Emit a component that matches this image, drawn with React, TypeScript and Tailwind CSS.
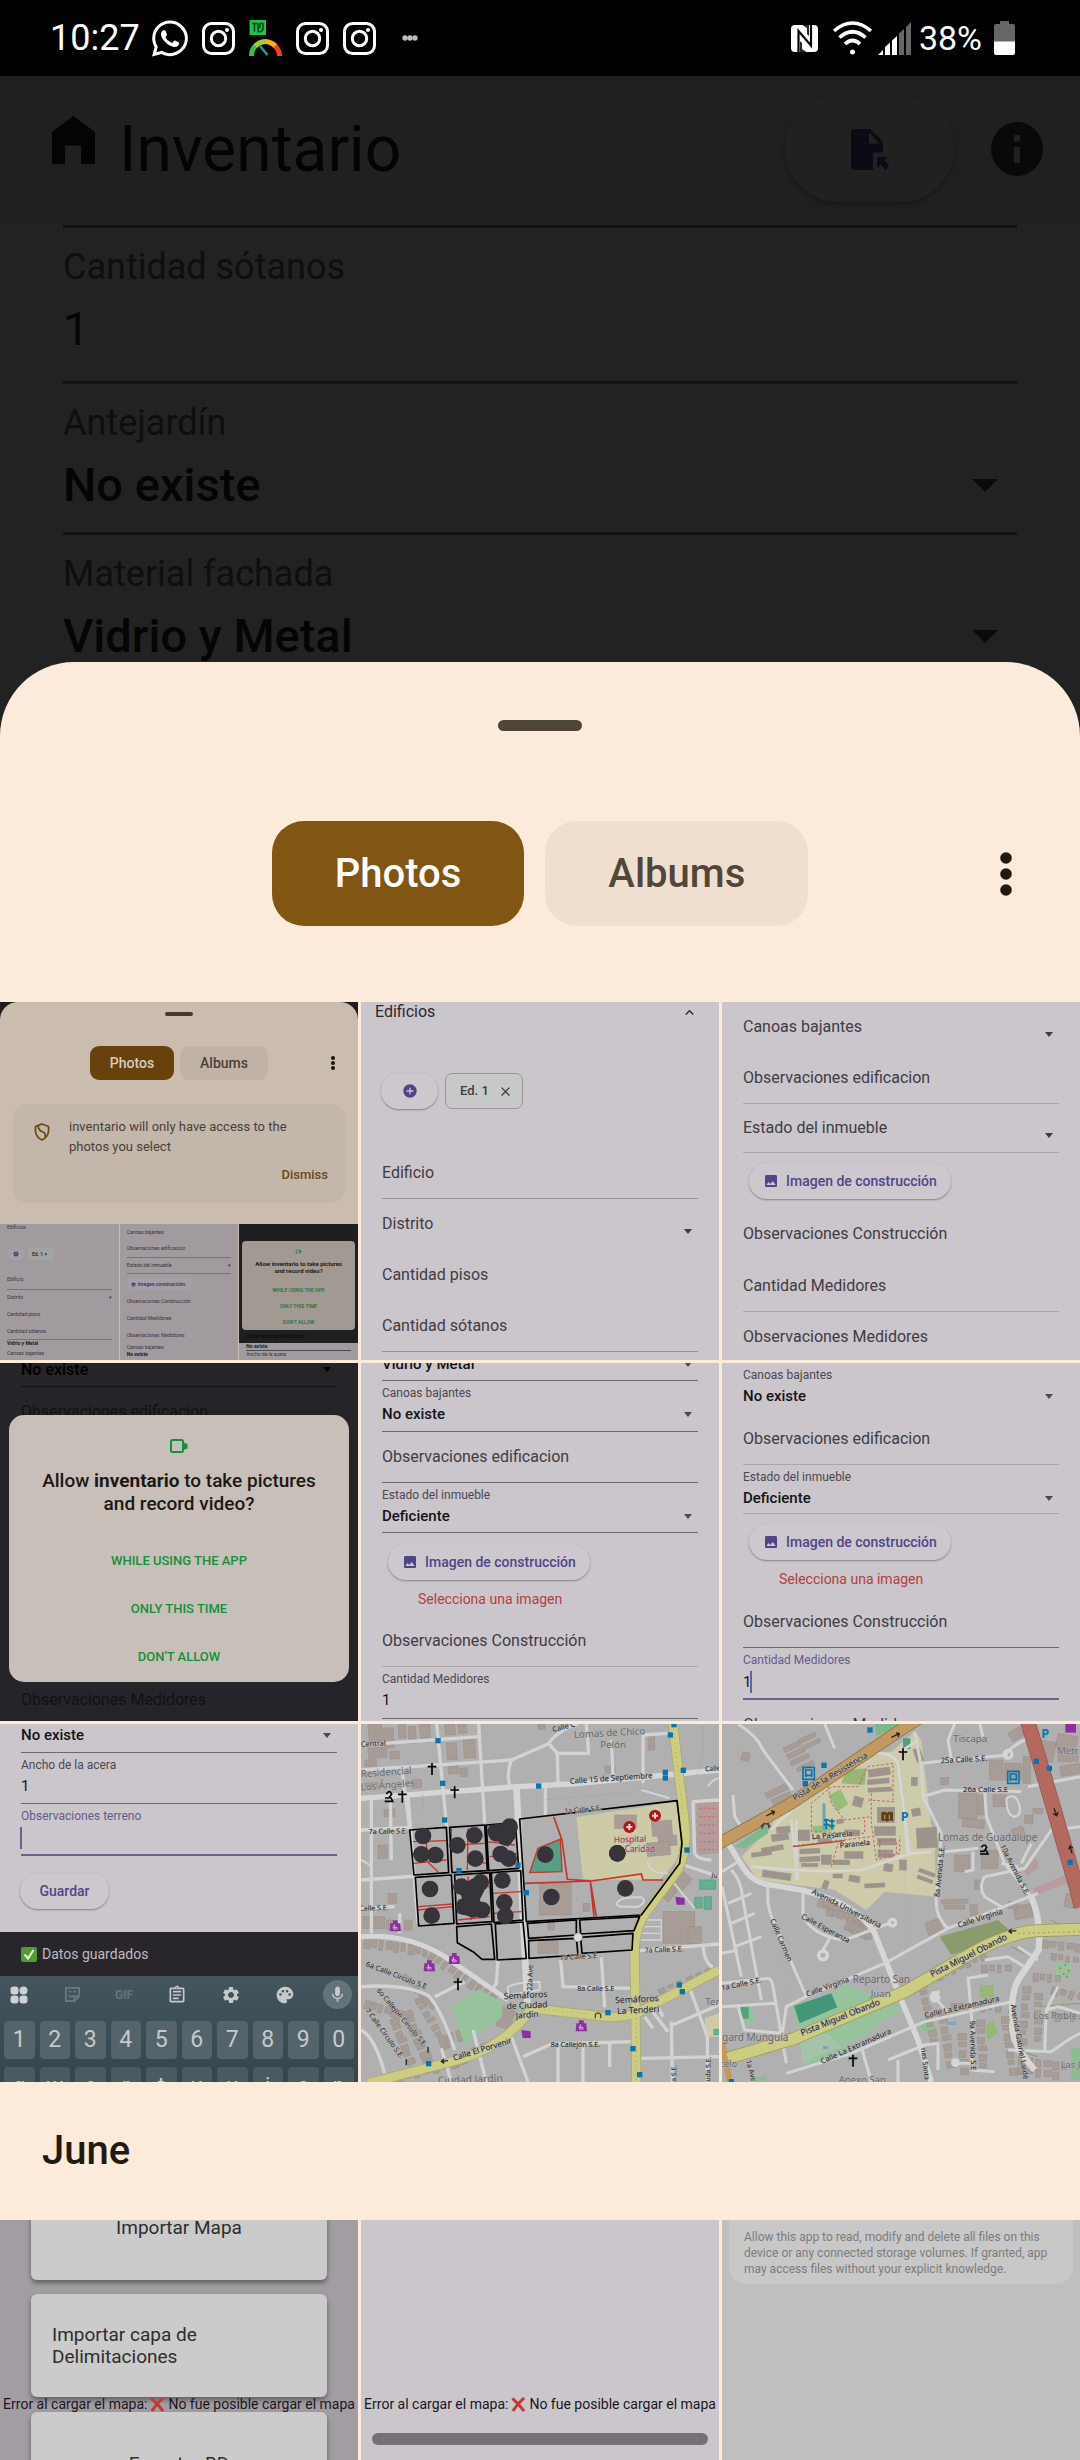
import React from "react";
import clsx from "clsx";
import { FaWhatsapp } from "react-icons/fa";
import {
  MdImage,
  MdMic,
  MdOutlineAssignment,
  MdOutlineVideocam,
  MdPalette,
  MdSettings,
  MdAddCircle,
  MdClose,
  MdKeyboardArrowUp,
} from "react-icons/md";

/* ---------- Status bar ---------- */

function InstagramIcon() {
  return (
    <svg viewBox="0 0 33 33" className="size-[33px]" fill="none" stroke="#fff" strokeWidth="3">
      <rect x="1.5" y="1.5" width="30" height="30" rx="8" />
      <circle cx="16.5" cy="16.5" r="7.2" />
      <circle cx="25" cy="8" r="2" fill="#fff" stroke="none" />
    </svg>
  );
}

function SpeedIcon() {
  return (
    <svg viewBox="0 0 33 36" className="h-[36px] w-[33px]" fill="none">
      <rect x="0.5" y="0" width="16.5" height="15" fill="#1fc24a" />
      <path d="M3 3.5h6M5.500 3.500v8M9 3.500v8h3.500l1.500-2v-6h-3v5" stroke="#0b3d18" strokeWidth="1.500" />
      <path d="M2.500 36A14 14 0 0 1 8 24.500" stroke="#3cc04c" strokeWidth="5" />
      <path d="M6.500 26A14 14 0 0 1 17 21.500" stroke="#a3cf2c" strokeWidth="5" />
      <path d="M16 21.500A14 14 0 0 1 27 27" stroke="#fbb40c" strokeWidth="5" />
      <path d="M26 26A14 14 0 0 1 30.500 36" stroke="#f4431c" strokeWidth="5" />
      <path d="M11 26l7.500 9" stroke="#3c8f92" strokeWidth="2.500" />
    </svg>
  );
}

function NfcIcon() {
  return (
    <svg viewBox="0 0 27 27" className="size-[27px]">
      <rect width="27" height="27" rx="4" fill="#fff" />
      <path d="M7.500 27V6L20 20.500V0" stroke="#000" strokeWidth="2.200" fill="none" />
      <path d="M6.500 3L18 14V8L11 0" stroke="#000" strokeWidth="0" fill="none" />
      <path d="M11 18V24L15.500 27H9V16zM16 9V3L11.500 0H18V11z" fill="#000" fillOpacity="0.85" />
    </svg>
  );
}

function WifiIcon() {
  return (
    <svg viewBox="0 0 39 34" className="h-[34px] w-[39px]" fill="none" stroke="#fff" strokeWidth="3.600" strokeLinecap="butt">
      <path d="M1 10Q19.500 -6 38 10" />
      <path d="M6.500 16.500Q19.500 5 32.500 16.500" />
      <path d="M12 23Q19.500 16 27 23" />
      <circle cx="19.500" cy="31" r="2.500" fill="#fff" stroke="none" />
    </svg>
  );
}

function SignalIcon() {
  return (
    <svg viewBox="0 0 33 33" className="size-[33px]">
      <path d="M0 33l5-5v5zM7 33v-8l5-4.500V33zM14 33V18.500l5-4.500v19z" fill="#fff" />
      <path d="M21 33V11.500l5-4.500v26zM28 33V5l5-5v33z" fill="#666" />
    </svg>
  );
}

function StatusBar() {
  return (
    <div className="flex h-[76px] shrink-0 items-center justify-between bg-black pr-[65px] pl-[50px] text-[36px] leading-none text-white">
      <div className="flex items-center gap-[14px]">
        <span className="-mr-[2px]">10:27</span>
        <FaWhatsapp className="h-[41px] w-[36px]" />
        <InstagramIcon />
        <SpeedIcon />
        <InstagramIcon />
        <InstagramIcon />
        <svg viewBox="0 0 16 6" className="ml-[12px] h-[6px] w-[16px]" fill="#bbb">
          <circle cx="3" cy="3" r="2.700" />
          <circle cx="8" cy="3" r="2.700" />
          <circle cx="13" cy="3" r="2.700" />
        </svg>
      </div>
      <div className="flex items-center">
        <NfcIcon />
        <span className="w-[15px]" />
        <WifiIcon />
        <span className="w-[6px]" />
        <SignalIcon />
        <span className="ml-[8px] text-[34px]">38%</span>
        <svg viewBox="0 0 21 34" className="ml-[12px] h-[34px] w-[21px]">
          <path d="M6 0h9v3h4q2 0 2 2v16H0V5q0-2 2-2h4z" fill="#666" />
          <path d="M0 20.500h21V32q0 2-2 2H2q-2 0-2-2z" fill="#fff" />
        </svg>
      </div>
    </div>
  );
}

/* ---------- Dimmed form behind the sheet ---------- */

function AppHeader() {
  return (
    <header className="flex h-[146px] shrink-0 items-center bg-[#202023] pr-[37px] pl-[52px] text-black">
      <svg viewBox="0 0 43 48" className="mb-[18px] h-[48px] w-[43px]" fill="#040404">
        <path d="M21.300 0L43 16V48H29V29.500H13V48H0V16z" />
      </svg>
      <h1 className="mt-[2px] ml-[24px] text-[64px] leading-none text-[#040404]">Inventario</h1>
      <button
        type="button"
        aria-label="Exportar"
        className="ml-auto flex h-[106px] w-[169px] items-center justify-center rounded-full bg-[#212121] shadow-[0_3px_5px_rgba(0,0,0,0.25)]"
      >
        <svg viewBox="0 0 38 41" className="h-[41px] w-[38px]" fill="#0d0a16" fillRule="evenodd">
          <path d="M4 0H19.500L32 12.500V23.500H22V41H4Q0 41 0 37V4Q0 0 4 0zM18 3.500V14.500H28.500z" />
          <path d="M26 28H36.500L33.500 31L38 36.500L34.500 41L29.500 35.500L26 39z" />
        </svg>
      </button>
      <button type="button" aria-label="Información" className="ml-[37px]">
        <svg viewBox="0 0 52 54" className="h-[54px] w-[52px]">
          <ellipse cx="26" cy="27" rx="26" ry="27" fill="#090909" />
          <path d="M23 13h6v6.500h-6zM23 25h6v16h-6z" fill="#202023" />
        </svg>
      </button>
    </header>
  );
}

const fieldText = "h-[56px] w-full bg-transparent text-[47px] leading-[56px] text-[#050505] outline-none";

function SelectField({ id, label, value }: { id: string; label: string; value: string }) {
  return (
    <div className="flex h-[151px] flex-col border-b-[3px] border-[#121212] pt-[17px]">
      <label htmlFor={id} className="text-[36px] leading-[44px] text-[#0e0e0e]">
        {label}
      </label>
      <div className="mt-[12px] flex items-center pr-[19px]">
        <select id={id} className={clsx(fieldText, "appearance-none font-medium")} defaultValue={value}>
          <option>{value}</option>
        </select>
        <svg viewBox="0 0 26 13" className="h-[13px] w-[26px] shrink-0" fill="#0a0a0a">
          <path d="M0 0h26L13 13z" />
        </svg>
      </div>
    </div>
  );
}

function FormBehind() {
  return (
    <form className="mx-[63px] mt-[3px] flex flex-col border-t-[3px] border-[#111]">
      <div className="flex h-[156px] flex-col border-b-[3px] border-[#121212] pt-[17px]">
        <label htmlFor="sotanos" className="text-[36px] leading-[44px] text-[#0e0e0e]">
          Cantidad sótanos
        </label>
        <input id="sotanos" defaultValue="1" className={clsx(fieldText, "mt-[12px]")} />
      </div>
      <SelectField id="antejardin" label="Antejardín" value="No existe" />
      <SelectField id="fachada" label="Material fachada" value="Vidrio y Metal" />
    </form>
  );
}

/* ---------- Pieces shared by the form thumbnails ---------- */

function Caret({ className }: { className?: string }) {
  return (
    <svg viewBox="0 0 8 5" className={clsx("h-[5px] w-[8px] shrink-0", className)} fill="currentColor">
      <path d="M0 0h8L4 5z" />
    </svg>
  );
}

const H = {
  49: "h-[49px]",
  50: "h-[50px]",
  51: "h-[51px]",
  52: "h-[52px]",
};

const LINES = {
  none: "border-transparent",
  light: "border-[#aaa6ab]",
  mid: "border-[#949095]",
  dark: "border-[#6c696e]",
  purple: "border-[#6b6190]",
  black: "border-[#121214]",
};

type RowProps = { label: string; h?: keyof typeof H; line?: keyof typeof LINES; caret?: boolean };

function EmptyRow({ label, h = 51, line = "none", caret }: RowProps) {
  return (
    <div className={clsx("mx-[21px] flex shrink-0 items-center justify-between border-b text-[16px] leading-[20px]", H[h], LINES[line])}>
      <span className="whitespace-nowrap">{label}</span>
      {caret && <Caret className="mt-[15px] mr-[6px]" />}
    </div>
  );
}

function FilledRow({
  label,
  value,
  h = 51,
  line = "dark",
  caret,
  focused,
}: RowProps & { value: string; focused?: boolean }) {
  return (
    <div
      className={clsx(
        "mx-[21px] flex shrink-0 flex-col pt-[4px]",
        focused ? "border-b-2" : "border-b",
        H[h],
        LINES[line],
      )}
    >
      <span className={clsx("text-[12px] leading-[16px]", focused ? "text-[#645a8c]" : "text-[#4b484e]")}>{label}</span>
      <span className="mt-[3px] flex items-center justify-between text-[15px] leading-[20px] text-[#141316]">
        <span className={clsx("flex items-center", caret && "font-medium")}>
          {value}
          {focused && <span className="-ml-px h-[22px] w-[2px] bg-[#6b6190]" />}
        </span>
        {caret && <Caret className="mr-[6px] text-[#4b484e]" />}
      </span>
    </div>
  );
}

function ImageButton() {
  return (
    <span className="ml-[27px] flex h-[36px] w-[202px] shrink-0 items-center rounded-full bg-[#cdc8ce] pl-[14px] text-[14px] font-medium text-[#51458a] shadow-[0_1px_2px_rgba(0,0,0,0.35)]">
      <MdImage className="mr-[7px] size-[16px]" />
      Imagen de construcción
    </span>
  );
}

const lilac = "flex h-full w-full flex-col overflow-hidden bg-[#cbc6cc] text-left text-[#3f3c42]";

/* ---------- Thumbnails ---------- */

function MiniLine({ children, strong }: { children: React.ReactNode; strong?: boolean }) {
  return <span className={clsx("block whitespace-nowrap", strong && "font-bold text-[#1d1b1f]")}>{children}</span>;
}

const tiny = "flex h-full min-w-0 flex-col overflow-hidden bg-[#a19a9f] px-[7px] text-[5px] leading-[7px] text-[#38353a]";

function PickerThumb() {
  return (
    <div className="h-full w-full overflow-hidden bg-[#1d1c1e] text-left">
      <div className="flex h-full flex-col rounded-t-[18px] bg-[#cabcaf]">
        <div className="mx-auto mt-[10px] h-[4px] w-[28px] shrink-0 rounded-full bg-[#46382f]" />
        <div className="mt-[30px] flex h-[34px] shrink-0 items-center pl-[90px] text-[14px] font-medium">
          <span className="flex h-full w-[84px] items-center justify-center rounded-[9px] bg-[#67420d] text-[#d5ccc3]">Photos</span>
          <span className="ml-[6px] flex h-full w-[88px] items-center justify-center rounded-[9px] bg-[#c0b2a6] text-[#4c4137]">
            Albums
          </span>
          <svg viewBox="0 0 4 16" className="mr-[23px] ml-auto h-[16px] w-[4px]" fill="#17120c">
            <circle cx="2" cy="3" r="2" />
            <circle cx="2" cy="8" r="2" />
            <circle cx="2" cy="13" r="2" />
          </svg>
        </div>
        <div className="mx-[13px] mt-[24px] flex h-[99px] shrink-0 rounded-[14px] bg-[#c3b6ab] text-[13px] leading-[20px] text-[#4a4037]">
          <svg viewBox="0 0 16 18" className="mt-[19px] ml-[21px] h-[18px] w-[16px] shrink-0" fill="none" stroke="#6b4812" strokeWidth="1.700">
            <path d="M8 1L14.500 3.500V8.500Q14 14 8 17Q2 14 1.500 8.500V3.500z" />
            <path d="M4 3Q5 8 9 9Q12 10 11 14" />
          </svg>
          <span className="mt-[13px] ml-[19px] flex flex-1 flex-col">
            <span className="whitespace-nowrap">inventario will only have access to the</span>
            <span>photos you select</span>
            <span className="mt-[8px] mr-[17px] self-end font-medium text-[#6b4812]">Dismiss</span>
          </span>
        </div>
        <div className="mt-[21px] grid min-h-0 flex-1 grid-cols-3 gap-px">
          <div className={tiny}>
            <MiniLine>Edificios</MiniLine>
            <div className="mt-[17px] flex h-[12px] shrink-0 gap-[3px]">
              <span className="flex w-[18px] items-center justify-center rounded-full bg-[#a59fa6] text-[#453a78]">
                <MdAddCircle className="size-[6px]" />
              </span>
              <span className="w-[26px] rounded-[2px] bg-[#a0a5a1] pl-[4px] font-bold leading-[12px]">Ed. 1 ×</span>
            </div>
            <div className="mt-[16px] h-[14px] shrink-0 border-b border-[#77737a]">Edificio</div>
            <div className="mt-[4px] flex h-[17px] shrink-0 justify-between">
              Distrito
              <span>▾</span>
            </div>
            <div className="h-[17px] shrink-0">Cantidad pisos</div>
            <div className="h-[12px] shrink-0 border-b border-[#77737a]">Cantidad sótanos</div>
            <MiniLine strong>Vidrio y Metal</MiniLine>
            <div className="mt-[3px]">Canoas bajantes</div>
          </div>
          <div className={tiny}>
            <div className="mt-[5px] h-[16px] shrink-0">Canoas bajantes</div>
            <div className="h-[13px] shrink-0 border-b border-[#77737a]">Observaciones edificacion</div>
            <div className="mt-[4px] flex h-[12px] shrink-0 justify-between border-b border-[#77737a]">
              Estado del inmueble
              <span>▾</span>
            </div>
            <span className="mt-[4px] flex h-[12px] w-[66px] shrink-0 items-center rounded-full bg-[#a59fa6] pl-[4px] font-bold text-[#453a78]">
              <MdImage className="mr-[2px] size-[5px]" />
              Imagen construcción
            </span>
            <div className="mt-[8px] h-[17px] shrink-0">Observaciones Construcción</div>
            <div className="h-[17px] shrink-0">Cantidad Medidores</div>
            <div className="h-[12px] shrink-0">Observaciones Medidores</div>
            <MiniLine>Canoas bajantes</MiniLine>
            <MiniLine strong>No existe</MiniLine>
          </div>
          <div className="flex min-w-0 flex-col overflow-hidden bg-[#1f1e20] text-[5px] leading-[7px]">
            <div className="mx-[3px] mt-[17px] flex h-[89px] shrink-0 flex-col items-center rounded-[4px] bg-[#a29992] text-[#16733a]">
              <MdOutlineVideocam className="mt-[7px] size-[7px]" />
              <span className="mt-[5px] text-center text-[6px] font-bold text-[#1d1a17]">
                Allow inventario to take pictures
                <br />
                and record video?
              </span>
              <span className="mt-[13px] font-medium">WHILE USING THE APP</span>
              <span className="mt-[9px] font-medium">ONLY THIS TIME</span>
              <span className="mt-[9px] font-medium">DON'T ALLOW</span>
            </div>
            <div className="px-[7px] leading-[13px] text-[#060606]">Observaciones Medidores</div>
            <div className="flex-1 bg-[#a19a9f] px-[7px] text-[#38353a]">
              <MiniLine strong>No existe</MiniLine>
              <div className="border-t border-[#4b484e]">Ancho de la acera</div>
            </div>
          </div>
        </div>
      </div>
    </div>
  );
}

function BuildingsThumb() {
  return (
    <div className={lilac}>
      <div className="flex h-[20px] shrink-0 items-center justify-between pr-[21px] pl-[14px] text-[16px] leading-[20px] text-[#2b292d]">
        Edificios
        <MdKeyboardArrowUp className="size-[17px]" />
      </div>
      <div className="mt-[51px] flex h-[36px] shrink-0 gap-[7px] pl-[20px]">
        <span className="flex w-[57px] items-center justify-center rounded-full bg-[#cdc8ce] text-[#51458a] shadow-[0_1px_2px_rgba(0,0,0,0.35)]">
          <MdAddCircle className="size-[16px]" />
        </span>
        <span className="flex w-[78px] items-center rounded-[7px] border border-[#99969a] bg-[#c6c9c7] pl-[14px] text-[13px] font-medium">
          Ed. 1
          <MdClose className="ml-[9px] size-[15px]" />
        </span>
      </div>
      <div className="mt-[39px] flex flex-col">
        <EmptyRow label="Edificio" line="mid" />
        <EmptyRow label="Distrito" caret />
        <EmptyRow label="Cantidad pisos" />
        <EmptyRow label="Cantidad sótanos" line="mid" />
      </div>
    </div>
  );
}

function GuttersThumb() {
  return (
    <div className={lilac}>
      <EmptyRow label="Canoas bajantes" caret />
      <EmptyRow label="Observaciones edificacion" line="light" />
      <EmptyRow label="Estado del inmueble" h={49} line="light" caret />
      <div className="mt-[10px] mb-[10px]">
        <ImageButton />
      </div>
      <EmptyRow label="Observaciones Construcción" />
      <EmptyRow label="Cantidad Medidores" line="light" h={52} />
      <EmptyRow label="Observaciones Medidores" />
    </div>
  );
}

function PermissionThumb() {
  return (
    <div className="relative h-full w-full overflow-hidden bg-[#252428] text-left text-[16px] leading-[20px] text-[#121113]">
      <div className="flex h-full flex-col justify-between">
        <div>
          <div className="mx-[21px] -mt-[3px] flex h-[27px] items-start justify-between border-b border-[#121214]">
            <span className="font-medium text-black">No existe</span>
            <Caret className="mt-[7px] mr-[6px] text-black" />
          </div>
          <div className="mt-[15px] pl-[21px]">Observaciones edificacion</div>
        </div>
        <div className="mb-[11px] pl-[21px]">Observaciones Medidores</div>
      </div>
      <div className="absolute inset-x-[9px] top-[52px] flex h-[267px] flex-col items-center rounded-[15px] bg-[#c8bfb9] text-[13px] font-medium text-[#14903c]">
        <svg viewBox="0 0 18 14" className="mt-[24px] h-[14px] w-[18px]" fill="none" stroke="currentColor" strokeWidth="2">
          <rect x="1" y="1" width="12" height="12" rx="1.500" />
          <path d="M13.500 3.500L17.500 5V9.500L13.500 11z" fill="currentColor" stroke="none" />
        </svg>
        <p className="mt-[16px] text-center text-[19px] leading-[23px] text-[#1c1815]">
          Allow <b>inventario</b> to take pictures
          <br />
          and record video?
        </p>
        <span className="mt-[36px]">WHILE USING THE APP</span>
        <span className="mt-[28px]">ONLY THIS TIME</span>
        <span className="mt-[28px]">DON'T ALLOW</span>
      </div>
    </div>
  );
}

function SelectImageNote() {
  return <span className="mt-[9px] ml-[57px] text-[14px] leading-[20px] text-[#b3403c]">Selecciona una imagen</span>;
}

function MissingImageThumb() {
  return (
    <div className={lilac}>
      <div className="-mt-[32px] flex flex-col">
        <FilledRow label="Material fachada" value="Vidrio y Metal" h={50} caret />
        <FilledRow label="Canoas bajantes" value="No existe" caret />
        <EmptyRow label="Observaciones edificacion" line="dark" />
        <FilledRow label="Estado del inmueble" value="Deficiente" h={50} caret />
      </div>
      <div className="mt-[11px]">
        <ImageButton />
      </div>
      <SelectImageNote />
      <div className="mt-[6px] flex flex-col">
        <EmptyRow label="Observaciones Construcción" h={52} line="light" />
        <FilledRow label="Cantidad Medidores" value="1" h={52} />
      </div>
    </div>
  );
}

function MetersThumb() {
  return (
    <div className={lilac}>
      <FilledRow label="Canoas bajantes" value="No existe" h={50} line="none" caret />
      <EmptyRow label="Observaciones edificacion" h={52} line="light" />
      <FilledRow label="Estado del inmueble" value="Deficiente" h={49} line="light" caret />
      <div className="mt-[10px]">
        <ImageButton />
      </div>
      <SelectImageNote />
      <div className="mt-[7px] flex flex-col">
        <EmptyRow label="Observaciones Construcción" h={52} line="dark" />
        <FilledRow label="Cantidad Medidores" value="1" h={52} line="purple" focused />
        <EmptyRow label="Observaciones Medidores" />
      </div>
    </div>
  );
}

function CheckEmoji() {
  return (
    <svg viewBox="0 0 16 15" className="h-[15px] w-[16px]">
      <rect width="16" height="15" rx="2" fill="#4f9c35" />
      <path d="M3.500 7.500L7 11.500L12.500 3" fill="none" stroke="#e4ecdf" strokeWidth="2.200" />
    </svg>
  );
}

function CrossEmoji() {
  return (
    <svg viewBox="0 0 16 16" className="mx-[3px] inline-block size-[15px] align-[-3px]" stroke="#c23b33" strokeWidth="3.200">
      <path d="M1.500 1.500Q8 7 14 15M14 1Q7 7 2 15" fill="none" />
    </svg>
  );
}

const DIGITS = ["1", "2", "3", "4", "5", "6", "7", "8", "9", "0"];
const LETTERS = ["q", "w", "e", "r", "t", "y", "u", "i", "o", "p"];

function KeyboardThumb() {
  return (
    <div className={lilac}>
      <div className="-mt-[22px] flex flex-col">
        <FilledRow label="Material acera" value="No existe" h={51} caret />
        <FilledRow label="Ancho de la acera" value="1" h={51} />
        <FilledRow label="Observaciones terreno" value="" h={52} line="purple" focused />
      </div>
      <span className="mt-[17px] ml-[20px] flex h-[36px] w-[89px] shrink-0 items-center justify-center rounded-full bg-[#cdc8ce] text-[14px] font-medium text-[#51458a] shadow-[0_1px_2px_rgba(0,0,0,0.35)]">
        Guardar
      </span>
      <div className="mt-[23px] flex h-[44px] shrink-0 items-center gap-[5px] bg-[#29262b] pl-[21px] text-[14px] text-[#bfbbc1]">
        <CheckEmoji />
        Datos guardados
      </div>
      <div className="min-h-0 flex-1 bg-linear-to-b from-[#44555d] to-[#33454d] text-[#c5c9cb]">
        <div className="flex h-[37px] items-center justify-between pr-[6px] pl-[10px]">
          <svg viewBox="0 0 18 18" className="size-[18px]" fill="#cfd2d4">
            <rect x="0.500" y="0.500" width="8" height="8" rx="3" />
            <rect x="9.500" y="0.500" width="8" height="8" rx="4" />
            <rect x="0.500" y="9.500" width="8" height="8" rx="3" />
            <rect x="9.500" y="9.500" width="8" height="8" rx="3" />
          </svg>
          <svg viewBox="0 0 18 18" className="ml-[20px] size-[17px]" fill="none" stroke="#6c7a81" strokeWidth="1.800">
            <path d="M2 2H16V11L11 16H2zM16 11H11V16M5 6H8M10 6H13M5 10Q8 13 11 10" />
          </svg>
          <span className="ml-[18px] text-[12px] font-bold text-[#65747b]">GIF</span>
          <MdOutlineAssignment className="ml-[18px] size-[20px]" />
          <MdSettings className="ml-[18px] size-[20px]" />
          <MdPalette className="ml-[18px] size-[20px]" />
          <span className="ml-[12px] flex size-[29px] items-center justify-center rounded-full bg-[#64727a]">
            <MdMic className="size-[19px]" />
          </span>
        </div>
        <div className="mt-[8px] grid grid-cols-10 gap-x-[5px] gap-y-[8px] px-[4px]">
          {DIGITS.map((d) => (
            <span key={d} className="flex h-[38px] items-center justify-center rounded-[4px] bg-[#55636a] text-[23px]">
              {d}
            </span>
          ))}
          {LETTERS.map((l) => (
            <span key={l} className="flex h-[38px] items-center justify-center rounded-[4px] bg-[#4b5a61] text-[22px] leading-none">
              {l}
            </span>
          ))}
        </div>
      </div>
    </div>
  );
}

/* ---------- Maps ---------- */

type Label = [text: string, x: number, y: number, rotate: number, size: number, color?: string];

function MapLabels({ labels }: { labels: Label[] }) {
  return (
    <g fontFamily='"Noto Sans", "Open Sans", sans-serif' stroke="#b8b8b8" strokeWidth="3" paintOrder="stroke" strokeLinejoin="round">
      {labels.map(([text, x, y, r, size, color], i) => (
        <text key={i} x={x} y={y} fontSize={size} fill={color ?? "#222222"} transform={`rotate(${r} ${x} ${y})`}>
          {text}
        </text>
      ))}
    </g>
  );
}

function Stops({ points }: { points: number[][] }) {
  return (
    <g fill="#0b74ad">
      {points.map(([x, y]) => (
        <rect key={`${x}-${y}`} x={x - 8} y={y - 8} width="16" height="16" />
      ))}
    </g>
  );
}

function Blocks({ items, fill = "#a79c96" }: { items: number[][]; fill?: string }) {
  return (
    <g fill={fill} stroke="#968c86" strokeWidth="1.500">
      {items.map(([x, y, w, h, r = 0], i) => (
        <rect key={i} x={x} y={y} width={w} height={h} transform={`rotate(${r} ${x} ${y})`} />
      ))}
    </g>
  );
}

function Crosses({ points }: { points: number[][] }) {
  return (
    <g stroke="#000" strokeWidth="5">
      {points.map(([x, y]) => (
        <path key={`${x}-${y}`} d={`M${x} ${y - 18}V${y + 18}M${x - 13} ${y - 7}H${x + 13}`} />
      ))}
    </g>
  );
}

function rowOfHouses(x: number, y: number, dx: number, dy: number, n: number, w: number, h: number, r: number) {
  return Array.from({ length: n }, (_, i) => [x + dx * i, y + dy * i, w - (i % 3) * 3, h - (i % 2) * 6, r]);
}

const CITY_HOUSES = [
  [30, 15, 40, 50, -4], [75, 25, 30, 60, -4], [120, 15, 22, 40, -4], [150, 20, 22, 50, -4], [185, 15, 30, 40, -4],
  [30, 85, 55, 30, -4], [95, 95, 28, 22, -4], [260, 15, 30, 30, -4], [300, 15, 25, 25, -4], [265, 70, 30, 50, -4],
  [315, 60, 35, 55, -4], [20, 120, 35, 20, -4], [270, 140, 30, 22, -4], [305, 145, 22, 25, -4], [160, 180, 30, 25, -4],
  [20, 190, 40, 20, -4], [78, 268, 32, 22, -2], [540, 15, 20, 15, -10], [770, 285, 65, 40, 0], [880, 305, 60, 45, -5],
  [900, 350, 55, 30, -5], [865, 370, 70, 40, -5], [545, 490, 95, 95, 0], [675, 550, 20, 25, 0], [570, 610, 20, 20, 0],
  [915, 575, 95, 95, 0], [990, 620, 40, 50, 0], [900, 520, 50, 40, -50], [940, 490, 50, 40, -50], [540, 660, 60, 40, 0],
  [870, 40, 20, 50, 0], [740, 140, 30, 20, -6], [60, 375, 28, 40, 0], [90, 520, 25, 30, 0], [580, 870, 18, 18, 0],
  [15, 590, 30, 35, 0], [50, 590, 30, 35, 0], [85, 600, 20, 30, 0], [140, 600, 22, 30, 0], [435, 860, 40, 60, 20],
  ...rowOfHouses(20, 655, 22, 3, 9, 18, 30, 5),
  ...rowOfHouses(225, 690, 20, 14, 10, 17, 32, 35),
  ...rowOfHouses(140, 760, 16, 18, 6, 22, 18, 40),
  ...rowOfHouses(25, 840, 20, 6, 6, 18, 26, 20),
  ...rowOfHouses(130, 880, 9, 20, 9, 32, 18, -20),
  ...rowOfHouses(95, 900, 8, 20, 7, 26, 18, -20),
  ...rowOfHouses(170, 840, 12, 20, 8, 24, 17, -25),
  ...rowOfHouses(240, 950, 26, -8, 4, 20, 34, -15),
  ...rowOfHouses(110, 1070, 28, -7, 8, 22, 20, -15),
  ...rowOfHouses(900, 810, 28, -12, 6, 20, 14, -24),
  ...rowOfHouses(340, 985, 26, -10, 5, 20, 24, -20),
];

const DOTS = [
  [195, 348], [190, 403], [232, 405], [298, 376], [349, 346], [352, 416], [428, 402], [452, 416], [216, 507], [221, 587],
  [433, 481], [439, 547], [442, 588], [562, 404], [778, 400], [580, 531], [802, 505], [368, 487], [310, 500], [345, 520],
  [318, 560], [345, 568], [372, 570], [415, 340], [442, 352], [455, 320],
];

function CensusMap() {
  return (
    <svg viewBox="9 12 1074 1074" className="block h-full w-full bg-[#b0b0b0]" fill="none">
      <path d="M655 292L955 245L965 330L975 400L905 480L675 478z" fill="#cdcba6" />
      <path d="M1083 880L1040 895L1045 950H1083z" fill="#cdcba6" />
      <Blocks items={CITY_HOUSES} />
      <path d="M280 858L365 808L435 850L430 895L350 945L320 975z" fill="#97c39c" />
      <path d="M1025 480h48v28h-48zM1010 532h22v32h-22zM1038 530h22v38h-22zM1068 928h15v16h-15z" fill="#62b191" stroke="#4e9c7c" strokeWidth="2" />
      <path d="M1015 250l68-10v160l-68 5z" fill="#b59b9a" />
      <path d="M1025 265h50M1025 290h50M1025 315h50M1025 340h50M1025 365h50M1025 388h50" stroke="#c46c6c" strokeWidth="4" strokeDasharray="6 6" />
      <g stroke="#d3d3d3" strokeWidth="10" strokeLinejoin="round">
        <path d="M9 75L365 50M9 150L460 120L570 72M570 72Q600 30 660 12M570 68L598 100L692 100L685 12M598 100L600 190M760 60L765 165" />
        <path d="M236 12L266 320M362 12L380 310M132 150L155 325M460 120Q445 160 455 195M40 240V640M97 235L100 420M9 480L180 468M9 330L160 322M150 225L180 610" />
        <path d="M9 565L110 560M125 580V640M420 720L415 790L400 812M608 720L615 800L820 805M730 712L740 862M495 1010L580 972L830 965M600 975V1086M675 975V1086M755 970V1040" />
        <path d="M845 692L1083 672M1035 680Q1040 730 1065 742M998 812L1048 950V1086M940 905L943 1086M850 1015L1083 1010M943 915L1083 855M880 870L930 935M860 890L885 925M900 860L915 890" />
        <path d="M968 432L1083 470M1083 240L1005 245L1010 400Q1020 420 1060 420M855 45L855 190M855 45L930 40M562 200V285M9 800Q150 790 215 830Q255 880 290 990M230 830L320 785M9 930Q50 950 80 1060M345 930L385 1086M460 950L510 1086M250 985L280 1086" />
        <path d="M1083 175Q1060 180 1050 200M9 420Q30 430 40 440M850 210L935 235M1010 565L940 480M780 545Q790 530 850 532Q870 545 840 560H790Q770 555 780 545M870 425Q870 460 930 460M480 790L545 785V810L450 825V800z" strokeWidth="6" />
      </g>
      <g stroke="#d6d6d6" strokeLinejoin="round">
        <path d="M9 235L480 200L640 192L1083 150" strokeWidth="16" />
        <path d="M475 195L508 850" strokeWidth="20" />
        <path d="M9 650Q150 640 260 710L450 840" strokeWidth="15" />
      </g>
      <path d="M845 600h65v60h-65M850 620h58M850 640h58" stroke="#d3d3d3" strokeWidth="4" />
      <g stroke="#aaa977" strokeWidth="30">
        <path d="M945 12L980 310Q990 390 960 450L870 570Q830 620 830 700L835 1086" />
        <path d="M30 1090L300 1020Q440 980 520 865L700 885Q780 900 840 878L1083 750" />
      </g>
      <g stroke="#cdcd82" strokeWidth="25">
        <path d="M945 12L980 310Q990 390 960 450L870 570Q830 620 830 700L835 1086" />
        <path d="M30 1090L300 1020Q440 980 520 865L700 885Q780 900 840 878L1083 750" />
      </g>
      <path d="M945 12L975 290M835 880V1086M530 865L690 882" stroke="#9a9a72" strokeWidth="2" strokeDasharray="4 10" />
      <path d="M1035 20V110L1015 170M195 225V275M560 240L830 215" stroke="#c07c74" strokeWidth="2.500" strokeDasharray="3 9" />
      <path d="M515 458L540 385L607 358L612 455z" fill="#55a183" stroke="#c8332f" strokeWidth="4" />
      <g stroke="#c8332f" strokeWidth="4">
        <path d="M165 365L265 362M165 430L265 420M205 365L208 425L240 455M280 325V445M330 325L328 450M282 375L380 370M330 420L385 430M385 365L470 375M395 410L480 400" />
        <path d="M180 560L285 552M180 570L285 560M292 490L395 500M300 540L390 560M330 470L340 600M400 520L490 515M405 580L490 575M300 600L395 590" />
        <path d="M587 290L612 360L628 478L700 483L850 462L855 480L915 480M500 490L697 483L715 590M697 483L708 590" strokeWidth="5" />
      </g>
      <g stroke="#000" strokeWidth="5" strokeLinejoin="round">
        <path d="M155 330L265 322L272 458L168 465zM275 322L380 315L388 452L282 458zM385 315L472 308L482 445L392 452z" />
        <path d="M172 472L280 465L288 610L182 618zM290 465L395 458L402 605L296 612zM400 458L488 452L495 600L408 608z" />
        <path d="M485 297L957 242L972 370L965 430L850 585L505 605z" />
        <path d="M296 620L400 612L410 718H372L345 695L298 668zM412 612L495 606L505 715L418 720z" />
        <path d="M508 610L655 600V645L512 655zM665 600L845 590L828 632L668 642zM512 662L655 655L660 705L513 715zM668 652L825 640L822 690L672 700z" />
      </g>
      <circle cx="660" cy="652" r="13" fill="#ddd" stroke="#888" strokeWidth="2" />
      <path d="M395 315L470 305L472 355L450 380L385 335zM345 475L390 490L365 540L390 575L345 592L298 580L312 535L300 500z" fill="#36333b" />
      <g fill="#36333b">
        {DOTS.map(([x, y]) => (
          <circle key={`${x}-${y}`} cx={x} cy={y} r="25" />
        ))}
      </g>
      {[[814, 321], [891, 287]].map(([x, y]) => (
        <g key={x}>
          <circle cx={x} cy={y} r="18" fill="#b0161c" />
          <path d={`M${x - 9} ${y}H${x + 9}M${x} ${y - 9}V${y + 9}`} stroke="#e6dada" strokeWidth="6" />
        </g>
      ))}
      <g fill="#8d2fa0">
        {[[112, 618], [214, 738], [289, 716], [670, 918]].map(([x, y]) => (
          <path key={x} d={`M${x - 15} ${y - 8}h8v-9h14v9h8l2 24h-34z`} />
        ))}
        <path d="M952 530l28 4v20h-24zM490 930l28 4v20h-24z" />
      </g>
      <g fill="none" stroke="#d9c2dd" strokeWidth="3">
        {[[112, 618], [214, 738], [289, 716], [670, 918]].map(([x, y]) => (
          <path key={x} d={`M${x - 3} ${y - 5}V${y + 4}H${x + 5}V${y + 10}M${x - 7} ${y + 2}Q${x - 6} ${y + 12} ${x + 2} ${y + 10}`} />
        ))}
      </g>
      <Stops points={[[240, 62], [254, 190], [260, 300], [542, 198], [937, 45], [948, 14], [922, 157], [922, 174], [976, 151], [987, 390], [964, 795], [973, 815], [750, 878], [825, 986], [845, 1064], [212, 1031], [505, 518], [480, 436], [303, 452]]} />
      <Crosses points={[[222, 147], [290, 217], [133, 230], [300, 793]]} />
      <path d="M85 222q10-14 16 0l-8 12h-12M80 244h24l-6-12" stroke="#000" strokeWidth="5" />
      <path d="M712 895v-12q8-8 16 0v12" stroke="#5a4636" strokeWidth="4" />
      <MapLabels
        labels={[
          ["Central", 9, 80, -3, 22], ["Residencial", 9, 172, -4, 29, "#686868"], ["Los Ángeles", 9, 212, -5, 29, "#686868"],
          ["Calle C", 585, 36, -14, 22], ["Lomas de Chico", 648, 54, -3, 29, "#686868"], ["Pelón", 727, 84, 0, 29, "#686868"],
          ["Calle 15 de Septiembre", 636, 191, -4, 23], ["Calle", 1042, 154, -4, 20], ["7a Calle S.E.", 32, 342, -1, 21],
          ["1a Calle S.E.", 620, 280, -5, 20], ["Hospital", 768, 368, -2, 25, "#ad3840"], ["Caridad", 800, 396, 0, 25, "#ad3840"],
          ["Calle S.E.", 4, 572, -1, 21], ["6a Calle Círculo S.E", 22, 738, 21, 22], ["6o Callejón Círculo S.E.", 55, 812, 50, 21],
          ["7 Calle Círculo S.E.", 22, 872, 54, 21], ["22a Ave", 522, 812, -88, 21], ["Semáforos", 438, 838, -3, 26],
          ["de Ciudad", 446, 868, -3, 26], ["Jardín", 474, 896, -5, 25], ["Semáforos", 772, 850, -3, 26],
          ["La Tenderi", 778, 882, -3, 26], ["8a Calle S.E", 658, 812, 0, 21], ["7a Calle S.E.", 860, 698, -2, 21],
          ["7a Calle S.E", 606, 720, -3, 21], ["8a Callejón S.E.", 578, 980, 0, 21], ["Calle El Porvenir", 288, 1022, -17, 24],
          ["Ciudad Jardín", 240, 1092, -2, 31, "#686868"], ["Ter", 1042, 856, 0, 29, "#686868"], ["a S.E.", 954, 1085, -88, 20],
          ["uda S.E.", 1056, 1085, -88, 20], ["Ju", 1060, 472, 8, 20],
        ]}
      />
      <circle cx="778" cy="400" r="25" fill="#36333b" />
      <path d="M270 1022l-20 2m8-7l-8 7l9 6M210 998V980M145 1035V1018" stroke="#222" strokeWidth="4" />
    </svg>
  );
}

const CAMPUS_BLOCKS = [
  [450, 150, 65, 22, -8], [448, 180, 65, 14, -5], [450, 205, 70, 12, -3], [478, 262, 52, 45, 0], [470, 320, 62, 26, 0],
  [478, 355, 55, 20, 0], [480, 390, 45, 22, 0], [410, 228, 28, 28, 15], [240, 330, 35, 32, 0], [300, 355, 40, 14, 0],
  [245, 388, 60, 14, -3], [245, 412, 60, 14, -3], [250, 430, 50, 10, 0], [310, 405, 30, 28, 0], [130, 385, 65, 14, -10],
  [100, 400, 60, 12, -8], [160, 345, 50, 20, -8], [175, 322, 40, 18, -5], [380, 395, 55, 20, 0], [345, 420, 50, 14, 0],
  [135, 450, 85, 20, 8], [345, 462, 28, 12, 0], [395, 465, 32, 18, 10], [440, 492, 60, 12, -3], [500, 430, 26, 22, 10],
  [545, 420, 20, 30, 0], [605, 445, 50, 10, 20], [600, 465, 48, 10, 20], [580, 172, 18, 25, 0], [580, 268, 25, 22, -10],
  [595, 325, 60, 60, -3], [320, 480, 15, 25, 20], [355, 300, 20, 12, -10], [585, 90, 20, 40, -20], [380, 330, 45, 18, 0],
];

const SUBURB_HOUSES = [
  [75, 95, 22, 25, 15], [195, 85, 55, 14, -25], [205, 105, 55, 14, -25], [215, 125, 60, 14, -25], [240, 60, 55, 12, -25],
  [250, 80, 60, 12, -25], [140, 220, 70, 18, -25], [160, 240, 60, 16, -25], [235, 145, 55, 12, -25], [668, 172, 24, 22, 0],
  [722, 220, 55, 75, 0], [780, 225, 20, 60, 0], [735, 295, 65, 25, 5], [825, 225, 40, 35, 0], [815, 120, 40, 60, 0],
  [860, 130, 50, 50, 0], [870, 40, 40, 30, -30], [915, 110, 22, 80, 0], [965, 60, 50, 60, 10], [1020, 40, 60, 45, 10],
  [1020, 90, 60, 35, 0], [1025, 140, 60, 30, -10], [880, 330, 35, 35, -20], [920, 285, 25, 25, 0], [945, 265, 30, 15, 0],
  [710, 405, 45, 50, 0], [790, 390, 50, 55, 0], [770, 480, 20, 28, 0], [670, 540, 80, 12, -2], [680, 555, 60, 12, 0],
  [755, 555, 22, 32, -5], [620, 610, 45, 45, -20], [885, 560, 55, 40, -10], [1045, 520, 40, 40, 10], [870, 545, 30, 20, 0],
  ...rowOfHouses(305, 530, 14, 7, 10, 24, 30, 15),
  ...rowOfHouses(330, 565, 16, 4, 7, 22, 22, 15),
  ...rowOfHouses(390, 600, 12, 6, 6, 26, 30, 25),
  ...rowOfHouses(970, 660, 26, 3, 5, 22, 24, 4),
  ...rowOfHouses(1000, 700, 22, 4, 4, 16, 20, 4),
  ...rowOfHouses(600, 790, 5, 24, 8, 24, 18, -15),
  ...rowOfHouses(650, 760, 22, -10, 7, 18, 26, -20),
  ...rowOfHouses(790, 735, 24, 0, 4, 18, 24, 0),
  ...rowOfHouses(660, 870, 4, 26, 7, 26, 20, -8),
  ...rowOfHouses(700, 850, 22, 0, 7, 17, 26, 0),
  ...rowOfHouses(720, 940, 2, 26, 5, 26, 20, 0),
  ...rowOfHouses(775, 900, 2, 26, 6, 26, 20, 0),
  ...rowOfHouses(850, 890, 4, 26, 7, 24, 20, 0),
  ...rowOfHouses(915, 800, -2, 26, 7, 24, 20, 0),
  ...rowOfHouses(945, 760, 22, 2, 4, 17, 24, 0),
  ...rowOfHouses(950, 820, 0, 26, 6, 24, 20, 0),
  ...rowOfHouses(1005, 800, 26, 6, 4, 20, 24, 20),
  ...rowOfHouses(1010, 880, 24, 0, 4, 18, 24, 0),
  ...rowOfHouses(900, 1010, 26, 4, 6, 22, 24, 0),
  ...rowOfHouses(900, 1040, 26, 4, 5, 22, 24, 0),
];

function CampusMap() {
  return (
    <svg viewBox="12 12 1074 1074" className="block h-full w-full bg-[#b0b0b0]" fill="none">
      <path d="M175 290L430 105L520 95L590 35L610 60L640 320L665 330L650 400L655 530L500 515L445 570L350 510L120 480L70 410L150 330z" fill="#cdcba9" />
      <path d="M50 380L155 305L150 340L80 385z" fill="#7db98b" />
      <path d="M370 190L385 150L445 145L440 195z" fill="#97b777" />
      <path d="M332 225L368 208L390 252L358 275z" fill="#97bd7b" />
      <path d="M280 320L350 310V330L290 340z" fill="#97bd7b" />
      <path d="M470 12H560L475 48z" fill="#7fb68d" />
      <path d="M555 55h22v32h-22z" fill="#4ba07e" />
      <path d="M665 650L840 600L885 640L700 705z" fill="#8b9b6c" />
      <path d="M225 855L340 820L380 790L560 870L500 900L440 950L380 975L400 1010L260 1040z" fill="#97c39c" />
      <path d="M228 858L340 820L358 862L245 910z" fill="#459678" />
      <path d="M240 920L330 940L370 980L290 1010L255 1035z" fill="#a6c3aa" />
      <path d="M595 905L640 895L655 925L620 938z" fill="#8bc095" />
      <path d="M60 858L100 850L112 905L75 920z" fill="#97c39c" />
      <path d="M68 860h24v36h-24z" fill="#55a183" />
      <path d="M785 795h42v38h-42zM800 920l25-20l15 40l-30 20z" fill="#97b777" />
      <path d="M110 1070h35v16h-35zM1060 985h26v95h-26z" fill="#8bbd93" />
      <circle cx="1037" cy="750" r="26" fill="#97c39c" />
      <path d="M915 440l40-25l8 25l-38 30zM945 505l110-45l10 22l-115 45z" fill="#b79ca0" />
      <Blocks items={CAMPUS_BLOCKS} fill="#9d948e" />
      <Blocks items={SUBURB_HOUSES} />
      <path d="M870 930Q900 1000 960 1010M900 800L870 880M880 680L960 720M960 860L1086 850M1000 600L1080 640" stroke="#8ba574" strokeWidth="4" />
      <g stroke="#d3d3d3" strokeWidth="9" strokeLinejoin="round">
        <path d="M60 12Q120 50 135 90L225 210M320 12L350 85M45 225L50 290L70 320M12 455L60 425M40 450Q70 480 75 540L130 840M12 500L70 770M30 550L100 520M40 610L110 580M50 680L130 650M12 700L60 690" />
        <path d="M150 500Q145 560 165 600L265 830M255 510V590Q290 650 380 660L520 608M315 690L335 655M12 790L150 775Q160 775 165 800L205 1030M12 860L170 850M60 860L80 930L190 940M70 1000L190 960L205 860L265 830" />
        <path d="M265 830L500 730L690 625L960 520M690 625Q650 590 655 530L670 340L615 230L610 140L590 35M615 130L650 125L870 105M615 230L680 210L910 215M800 210L805 290L860 430L940 530M765 395V450L740 455" />
        <path d="M700 115L690 60L710 12M795 50L785 12M860 105Q900 60 945 55M800 470L920 445L1000 330L1086 320M800 470Q780 500 800 530L850 560M930 200L1086 170M850 430L900 440M910 430L940 370" />
        <path d="M205 1060L400 1000L620 905L880 845M510 1020L620 975L660 970V1050M540 1020V1086M750 770L765 940L760 1050L830 1055M710 1030H760M750 775L810 765M650 830L690 880M640 820L665 815" />
        <path d="M800 720L870 710L920 740M900 680L960 720M1086 880L1020 860L985 870L980 990M870 990L1000 995L1050 960L1086 940M985 870L1020 800M430 980L460 1086M680 395L780 385" />
      </g>
      <g stroke="#d6d6d6" strokeLinejoin="round">
        <path d="M30 370L80 450Q110 490 160 495L250 510Q420 550 470 640L550 840L600 960L640 1086" strokeWidth="17" />
        <path d="M940 530Q970 600 962 690L900 780Q875 830 885 900Q870 960 950 1050" strokeWidth="19" />
        <circle cx="315" cy="706" r="13" strokeWidth="11" />
        <circle cx="523" cy="608" r="10" strokeWidth="10" />
        <circle cx="870" cy="103" r="12" strokeWidth="9" />
        <path d="M865 235Q895 215 905 260Q910 290 885 290Q865 280 865 235" strokeWidth="6" />
        <path d="M235 300V480M440 100Q520 90 540 130L575 400M600 60L540 100M100 440Q300 460 430 450L580 400L640 395M160 330Q190 290 320 200L440 110M220 300L240 480M560 290L570 400" strokeWidth="8" />
      </g>
      <circle cx="712" cy="1028" r="13" fill="#d6d6d6" />
      <circle cx="651" cy="832" r="16" fill="#d6d6d6" />
      <g stroke="#a08fc0" strokeWidth="2" strokeOpacity="0.500" strokeDasharray="3 8">
        <path d="M235 300V480M545 130L575 390M150 560L220 840M560 400V700" />
      </g>
      <g stroke="#c9605e" strokeWidth="3" strokeDasharray="8 6">
        <path d="M280 335V250L340 200L420 200L450 140L525 130V240M330 200L340 250L380 300L460 290M460 220V310L475 420L545 400V350M225 378L460 350M340 440L360 370M450 240L530 245M440 300V340L280 335" />
        <path d="M485 360h50v45h-50z" />
      </g>
      <path d="M225 380L380 362" stroke="#b93c3a" strokeWidth="4" />
      <path d="M0 372L220 250L575 12L620 -15" stroke="#8f7447" strokeWidth="38" />
      <path d="M0 372L220 250L575 12L620 -15" stroke="#c29a61" strokeWidth="33" />
      <path d="M925 -10L985 190L1075 500L1090 560" stroke="#93574e" strokeWidth="46" />
      <path d="M925 -10L985 190L1075 500L1090 560" stroke="#b5695e" strokeWidth="41" />
      <path d="M12 960L35 1086" stroke="#c29a61" strokeWidth="18" />
      <path d="M30 1015L230 955L560 815L760 700Q880 635 960 632L1086 628" stroke="#9a9a62" strokeWidth="39" />
      <path d="M30 1015L230 955L560 815L760 700Q880 635 960 632L1086 628" stroke="#cdcd82" strokeWidth="34" />
      <path d="M925 20L1070 510M900 640L1086 635" stroke="#8a6a5c" strokeWidth="2" strokeDasharray="5 10" />
      <path d="M520 52l24-11m-10-3l10 3l-4 10M145 288l24-13m-10-3l10 3l-4 10M895 632l-22 2m8-7l-8 7l9 6M1008 265l8 22m4-11l-4 11l-10-6M1062 400l-6-22m-4 10l4-10l9 6" stroke="#222" strokeWidth="4" />
      <path d="M128 320q15-18 30 0M138 308l-6 18M150 308l4 18" stroke="#4a4036" strokeWidth="4" />
      <path d="M318 250V330" stroke="#6da5b4" strokeWidth="9" />
      <path d="M318 302q8-7 16 0t16 0M318 316q8-7 16 0t16 0M325 296v32M342 296v32" stroke="#0b74ad" strokeWidth="5" />
      <path d="M490 277q10-5 17 2q7-7 18-2v26q-10-4-18 2q-8-6-17-2z" fill="#5f3f14" />
      <path d="M500 284v14M514 284v14" stroke="#b08a4c" strokeWidth="4" />
      <path d="M1042 12h32v26h-32z" fill="#8d2fa0" />
      <path d="M686 905h28v10h-28zM315 978h16v10h-16z" fill="#7ba6bd" />
      <g stroke="#0b74ad" strokeWidth="5">
        {[[272, 160], [886, 172]].map(([x, y]) => (
          <path key={x} d={`M${x - 17} ${y - 18}h34v36h-34zM${x - 9} ${y - 10}h18v16h-18zM${x - 8} ${y + 6}v6M${x + 8} ${y + 6}v6`} />
        ))}
      </g>
      <Stops points={[[456, 30], [318, 136], [262, 191], [955, 124], [994, 145], [1056, 427], [40, 1085]]} />
      <Crosses points={[[555, 103], [405, 1022]]} />
      <path d="M790 382q10-14 16 0l-8 12h-12M786 402h24l-6-12" stroke="#000" strokeWidth="5" />
      <path d="M1025 745h4M1040 735h4M1050 752h4M1035 762h4M1045 770h4" stroke="#c9484a" strokeWidth="5" />
      <MapLabels
        labels={[
          ["Pista de la Resistencia", 230, 243, -31, 25], ["Tiscapa", 706, 67, 0, 29, "#686868"], ["25a Calle S.E.", 668, 130, -3, 23],
          ["26a Calle S.E", 735, 216, 0, 23], ["Metr", 1018, 102, 0, 28, "#686868"], ["Lomas de Guadalupe", 660, 363, 0, 30, "#686868"],
          ["La Pasarela", 282, 358, -5, 23], ["Paranela", 366, 384, -6, 22], ["8a Avenida S.E.", 664, 532, -84, 22],
          ["10a Avenida S.E.", 846, 378, 63, 22], ["Avenida Universitaria", 280, 520, 27, 23], ["Calle Esperanza", 248, 594, 28, 22],
          ["Calle Carmen", 156, 600, 67, 22], ["Calle Virginia", 722, 624, -18, 23], ["Pista Miguel Obando", 642, 772, -27, 26],
          ["Calle Virginia", 268, 830, -20, 22], ["Reparto San", 404, 790, 0, 30, "#686868"], ["Juan", 458, 832, 0, 29, "#686868"],
          ["Pista Miguel Obando", 252, 948, -22, 26], ["Calle La Extramadura", 622, 894, -13, 23], ["1a Calle S.E.", 12, 812, -12, 22],
          ["gard Munguía", 12, 962, 0, 30, "#686868"], ["Calle La Extramadura", 312, 1032, -24, 23], ["Los Roble", 946, 896, 0, 29, "#686868"],
          ["celo", 4, 1042, 0, 28, "#686868"], ["Anexo San", 362, 1090, 0, 29, "#686868"], ["Las J", 1028, 1044, 0, 28, "#686868"],
          ["9a Avenida S.E", 756, 902, 89, 22], ["Avenida Gabriel Lardé", 878, 855, 80, 22], ["nes Santa", 610, 985, 84, 21],
          ["1a Ave", 84, 1022, 75, 21],
        ]}
      />
      <g fontFamily='"Noto Sans", sans-serif' fontWeight="700" fontSize="38" fill="#0b74ad">
        <text x="548" y="304">P</text>
        <text x="970" y="54">P</text>
      </g>
    </svg>
  );
}

function ErrorText() {
  return (
    <span className="text-[14px] leading-[15px] whitespace-nowrap text-[#19171b]">
      Error al cargar el mapa:
      <CrossEmoji />
      No fue posible cargar el mapa
    </span>
  );
}

const importCard = "mx-[31px] flex shrink-0 rounded-[6px] bg-[#cbcbcb] text-[19px] leading-[22px] text-[#2e2e2e] shadow-[0_3px_5px_rgba(0,0,0,0.4)]";

function ImportThumb() {
  return (
    <div className="flex h-full w-full flex-col overflow-hidden bg-[#a29da3] text-left">
      <div className={clsx(importCard, "-mt-[45px] h-[105px] items-center justify-center")}>Importar Mapa</div>
      <div className={clsx(importCard, "mt-[14px] h-[103px] flex-col justify-center pl-[21px]")}>
        <span>Importar capa de</span>
        <span>Delimitaciones</span>
      </div>
      <div className="flex h-[15px] shrink-0 justify-center">
        <ErrorText />
      </div>
      <div className={clsx(importCard, "h-[103px] items-center justify-center")}>Exportar BD</div>
    </div>
  );
}

function ErrorThumb() {
  return (
    <div className={clsx(lilac, "items-center pt-[177px]")}>
      <ErrorText />
    </div>
  );
}

function StorageThumb() {
  return (
    <div className="flex h-full w-full flex-col bg-[#bfbfbf] text-left">
      <p className="mx-[7px] h-[64px] rounded-b-[17px] bg-[#c8c8c8] pt-[9px] pl-[15px] text-[12px] leading-[16px] whitespace-nowrap text-[#7c7c7c]">
        Allow this app to read, modify and delete all files on this
        <br />
        device or any connected storage volumes. If granted, app
        <br />
        may access files without your explicit knowledge.
      </p>
    </div>
  );
}

/* ---------- Photo picker sheet ---------- */

function PhotoGrid({ photos }: { photos: { name: string; view: React.ReactNode }[] }) {
  return (
    <ul className="grid shrink-0 grid-cols-3 gap-[3px]">
      {photos.map((p) => (
        <li key={p.name} className="aspect-square overflow-hidden">
          <button type="button" title={p.name} className="block h-full w-full">
            {p.view}
          </button>
        </li>
      ))}
    </ul>
  );
}

const RECENT = [
  { name: "Photo 1", view: <PickerThumb /> },
  { name: "Photo 2", view: <BuildingsThumb /> },
  { name: "Photo 3", view: <GuttersThumb /> },
  { name: "Photo 4", view: <PermissionThumb /> },
  { name: "Photo 5", view: <MissingImageThumb /> },
  { name: "Photo 6", view: <MetersThumb /> },
  { name: "Photo 7", view: <KeyboardThumb /> },
  { name: "Photo 8", view: <CensusMap /> },
  { name: "Photo 9", view: <CampusMap /> },
];

const JUNE = [
  { name: "Photo 10", view: <ImportThumb /> },
  { name: "Photo 11", view: <ErrorThumb /> },
  { name: "Photo 12", view: <StorageThumb /> },
];

function PickerSheet() {
  return (
    <section
      role="dialog"
      aria-label="Photo picker"
      className="absolute inset-x-0 top-[662px] bottom-0 flex flex-col overflow-hidden rounded-t-[74px] bg-[#fceadb]"
    >
      <div className="mx-auto mt-[58px] h-[11px] w-[84px] shrink-0 rounded-full bg-[#4f4539]" />
      <div className="mt-[90px] mb-[76px] grid shrink-0 grid-cols-[1fr_auto_1fr] items-center">
        <div role="tablist" className="col-start-2 flex gap-[21px] text-[40px] leading-[105px] font-medium">
          <button type="button" role="tab" aria-selected="true" className="rounded-[32px] bg-[#815512] px-[63px] text-white">
            Photos
          </button>
          <button type="button" role="tab" aria-selected="false" className="rounded-[32px] bg-[#f0dfcf] px-[63px] text-[#50463a]">
            Albums
          </button>
        </div>
        <button type="button" aria-label="More options" className="mr-[62px] justify-self-end">
          <svg viewBox="0 0 24 44" className="h-[44px] w-[24px]" fill="#211a11">
            <circle cx="12" cy="6" r="5.800" />
            <circle cx="12" cy="22" r="5.800" />
            <circle cx="12" cy="38" r="5.800" />
          </svg>
        </button>
      </div>
      <PhotoGrid photos={RECENT} />
      <h2 className="flex h-[138px] shrink-0 items-center pl-[42px] text-[40px] leading-none font-medium text-[#211a11]">June</h2>
      <PhotoGrid photos={JUNE} />
    </section>
  );
}

export default function App() {
  return (
    <main className="relative flex h-screen flex-col overflow-hidden bg-[#222222] font-['Roboto',sans-serif]">
      <StatusBar />
      <AppHeader />
      <FormBehind />
      <PickerSheet />
      <div className="absolute bottom-[15px] left-1/2 h-[12px] w-[336px] -translate-x-1/2 rounded-full bg-[#747276]" />
    </main>
  );
}
